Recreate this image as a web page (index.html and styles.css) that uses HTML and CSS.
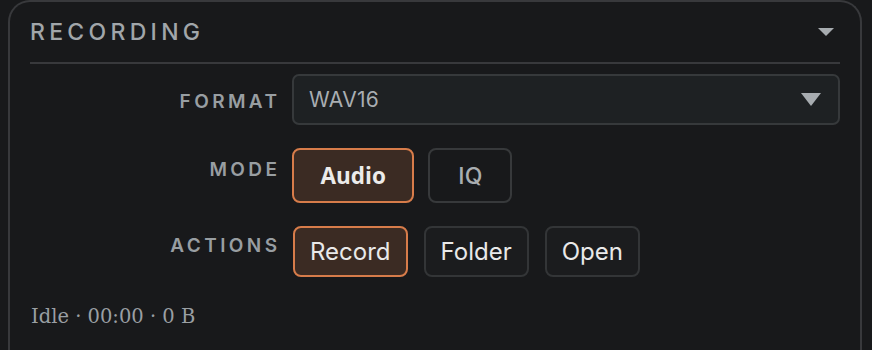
FILE: index.html
```html
<!DOCTYPE html>
<html>
<head>
<meta charset="utf-8">
<link rel="stylesheet" href="styles.css">
</head>
<body>
<section class="panel">
  <header class="panel-head">
    <h2 class="panel-title">RECORDING</h2>
    <span class="caret caret-sm"></span>
  </header>
  <div class="divider"></div>
  <div class="form">
    <div class="label label-format">FORMAT</div>
    <div class="select">
      <span class="select-value">WAV16</span>
      <span class="caret caret-lg"></span>
    </div>
    <div class="label label-btn">MODE</div>
    <div class="btn-group">
      <button class="seg seg-active">Audio</button>
      <button class="seg">IQ</button>
    </div>
    <div class="label label-btn label-actions">ACTIONS</div>
    <div class="btn-group wide-gap">
      <button class="act act-active">Record</button>
      <button class="act">Folder</button>
      <button class="act">Open</button>
    </div>
  </div>
  <p class="status">Idle · 00:00 · 0 B</p>
</section>
</body>
</html>
```

FILE: styles.css
```css
html, body {
  margin: 0;
  padding: 0;
  background: #18191b;
  height: 100%;
  overflow: hidden;
}
body {
  padding: 0 10px 0 8px;
  font-family: Inter, "Noto Sans", sans-serif;
}
.panel {
  border: 2px solid #38393c;
  border-bottom: none;
  border-radius: 22px 22px 0 0;
  padding: 13px 20px 40px 20px;
  min-height: 400px;
  box-sizing: border-box;
}
.panel-head {
  display: flex;
  align-items: center;
  justify-content: space-between;
  height: 34px;
  padding-right: 6px;
}
.panel-title {
  margin: 0;
  font-weight: 500;
  font-size: 23px;
  letter-spacing: 4.3px;
  color: #a1a6aa;
  line-height: 30px;
}
.caret {
  display: block;
  width: 0;
  height: 0;
  border-left: solid transparent;
  border-right: solid transparent;
  border-top: solid #a7acb0;
}
.caret-sm {
  border-left-width: 8px;
  border-right-width: 8px;
  border-top-width: 8px;
}
.caret-lg {
  border-left-width: 10px;
  border-right-width: 10px;
  border-top-width: 13px;
}
.divider {
  height: 2px;
  background: #38393c;
  margin-top: 13px;
}
.form {
  display: grid;
  grid-template-columns: 247px 1fr;
  column-gap: 15px;
  row-gap: 23px;
  margin-top: 10px;
}
.label {
  text-align: right;
  font-size: 19px;
  font-weight: 600;
  letter-spacing: 3.4px;
  margin-right: -3.4px;
  color: #989ea2;
  line-height: 24px;
}
.label-format {
  align-self: center;
  padding-top: 4px;
}
.label-btn {
  align-self: start;
  padding-top: 10px;
}
.label-actions {
  padding-top: 8px;
}
.select {
  height: 51px;
  box-sizing: border-box;
  border: 2px solid #36393b;
  border-radius: 7px;
  background: #1e2123;
  display: flex;
  align-items: center;
  justify-content: space-between;
  padding: 0 17px 0 15px;
}
.select-value {
  font-size: 21px;
  color: #a9aeb2;
  letter-spacing: 0.3px;
}
.btn-group {
  display: flex;
  gap: 14px;
}
.btn-group.wide-gap {
  gap: 16px;
  padding-left: 1px;
}
button {
  font-family: inherit;
  cursor: pointer;
  box-sizing: border-box;
  border-radius: 8px;
}
.seg {
  height: 55px;
  padding: 0 28px;
  border: 2px solid #37393b;
  background: #18191b;
  color: #a9aeb1;
  font-size: 23px;
  font-weight: 500;
}
.seg-active {
  font-family: "Open Sans", "Noto Sans", sans-serif;
  font-weight: 700;
  font-size: 22.5px;
  color: #ecebea;
  padding: 0 26.5px;
  border-color: #d77c4a;
  background: #3b2b23;
}
.act {
  height: 51px;
  padding: 0 15px;
  border: 2px solid #333537;
  background: #1b1c1e;
  color: #e9e9e9;
  font-size: 24px;
  font-weight: 400;
}
.act-active {
  border-color: #d77c4a;
  background: #3b2b23;
}
.status {
  margin: 28px 0 0 1px;
  font-family: "DejaVu Serif", "Liberation Serif", serif;
  font-size: 19.5px;
  color: #9a9fa3;
}
```
